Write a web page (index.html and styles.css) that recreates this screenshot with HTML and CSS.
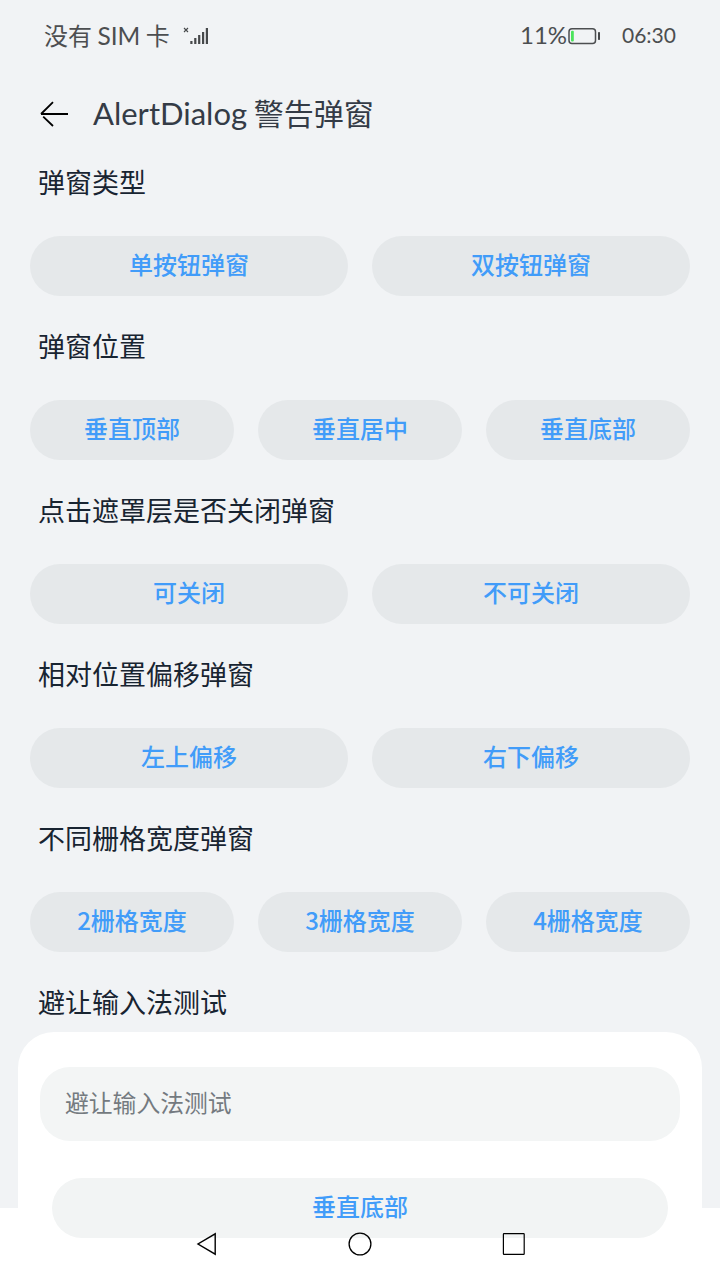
FILE: index.html
```html
<!DOCTYPE html>
<html lang="zh-CN">
<head>
<meta charset="utf-8">
<title>AlertDialog 警告弹窗</title>
<link rel="stylesheet" href="styles.css">
</head>
<body>
<div class="screen">
  <main class="page">
    <div class="status">
      <span class="carrier">没有 <span class="sim">SIM</span> 卡</span>
      <svg class="signal" width="26" height="18" viewBox="0 0 26 18" fill="none" stroke="#46484a">
        <path d="M1 1l4 4M5 1l-4 4" stroke-width="1.1"/>
        <path d="M8.4 14v3M12.3 11v6M16.2 8v9M20.1 5v12M23.9 1v16" stroke-width="2.2"/>
      </svg>
      <span class="percent">11%</span>
      <svg class="battery" width="33" height="18" viewBox="0 0 33 18">
        <rect x="1" y="1.7" width="26.5" height="14.8" rx="3" fill="none" stroke="#4c4e50" stroke-width="1.5"/>
        <rect x="3" y="3.8" width="2.8" height="10.6" rx="1" fill="#4be35b"/>
        <rect x="30" y="5" width="2" height="8" rx=".7" fill="#46484a"/>
      </svg>
      <time class="clock">06:30</time>
    </div>
    <header class="header">
      <svg class="back" width="30" height="28" viewBox="0 0 30 28" fill="none" stroke="#000" stroke-width="1.8">
        <path d="M2 14h27M14 2.2L2 14M4.2 16.6l9.8 9.4"/>
      </svg>
      <h1 class="title"><span class="title-latin">AlertDialog</span> 警告弹窗</h1>
    </header>
    <section class="group">
      <h2 class="label">弹窗类型</h2>
      <div class="row"><button class="btn">单按钮弹窗</button><button class="btn">双按钮弹窗</button></div>
    </section>
    <section class="group">
      <h2 class="label">弹窗位置</h2>
      <div class="row"><button class="btn">垂直顶部</button><button class="btn">垂直居中</button><button class="btn">垂直底部</button></div>
    </section>
    <section class="group">
      <h2 class="label">点击遮罩层是否关闭弹窗</h2>
      <div class="row"><button class="btn">可关闭</button><button class="btn">不可关闭</button></div>
    </section>
    <section class="group">
      <h2 class="label">相对位置偏移弹窗</h2>
      <div class="row"><button class="btn">左上偏移</button><button class="btn">右下偏移</button></div>
    </section>
    <section class="group">
      <h2 class="label">不同栅格宽度弹窗</h2>
      <div class="row"><button class="btn">2栅格宽度</button><button class="btn">3栅格宽度</button><button class="btn">4栅格宽度</button></div>
    </section>
    <section class="group">
      <h2 class="label">避让输入法测试</h2>
    </section>
  </main>
  <div class="sheet">
    <input class="field" type="text" placeholder="避让输入法测试">
    <button class="btn sheet-btn">垂直底部</button>
  </div>
  <nav class="nav">
    <svg width="24" height="24" viewBox="0 0 24 24" fill="none" stroke="#000" stroke-width="1.4"><path d="M21.2 1.8v20.4L4 12z"/></svg>
    <svg width="24" height="24" viewBox="0 0 24 24" fill="none" stroke="#000" stroke-width="1.3"><circle cx="12" cy="12" r="10.9"/></svg>
    <svg width="24" height="24" viewBox="0 0 24 24" fill="none" stroke="#000" stroke-width="1.2"><rect x="1.4" y="1.6" width="20.8" height="20.8" rx=".6"/></svg>
  </nav>
</div>
</body>
</html>
```
FILE: styles.css
```css
* { box-sizing: border-box; }
body { margin: 0; background: #fff; }
.screen {
  position: relative;
  width: 720px;
  height: 1280px;
  overflow: hidden;
  font-family: "Noto Sans CJK SC", sans-serif;
}
.page { height: 1208px; background: #f1f3f5; overflow: hidden; }
.status {
  display: flex;
  align-items: center;
  height: 72px;
  padding: 0 45px 0 44px;
  color: #4c4e50;
  font-size: 24px;
}
.carrier { width: 126px; padding-bottom: 4px; white-space: nowrap; }
.sim { font-family: Lato, sans-serif; font-size: 24.5px; }
.signal { margin-left: 13px; }
.percent {
  width: 46px;
  margin-left: auto;
  padding-bottom: 3px;
  font-family: Lato, sans-serif;
  font-size: 24px;
  white-space: nowrap;
}
.battery { margin-left: 2px; }
.clock {
  width: 53px;
  margin-left: 21px;
  padding-bottom: 3px;
  font-family: Lato, sans-serif;
  font-size: 21px;
  white-space: nowrap;
}
.header {
  display: flex;
  align-items: center;
  height: 84px;
  padding-left: 39px;
}
.title {
  margin: 0 0 0 24px;
  padding-bottom: 4px;
  color: #343b46;
  font-size: 30px;
  font-weight: 400;
  white-space: nowrap;
}
.title-latin { font-family: Lato, sans-serif; font-size: 31px; }
.group { height: 164px; padding: 0 30px; }
.label {
  margin: 0;
  padding: 6px 8px 0;
  height: 80px;
  color: #182431;
  font-size: 27px;
  font-weight: 400;
  line-height: 40px;
}
.row { display: flex; gap: 24px; }
.btn {
  flex: 1;
  height: 60px;
  padding: 0 0 5px;
  border: 0;
  border-radius: 30px;
  background: #e5e8ea;
  color: #419cf9;
  font: 500 24px "Noto Sans CJK SC", sans-serif;
}
.sheet {
  position: absolute;
  inset: 1032px 18px 0;
  display: flex;
  flex-direction: column;
  padding: 35px 22px 0;
  border-radius: 36px 36px 0 0;
  background: #fff;
}
.field {
  height: 74px;
  padding: 0 25px 5px;
  border: 0;
  border-radius: 30px;
  background: #f3f5f5;
  font: 400 23.8px "Noto Sans CJK SC", sans-serif;
}
.field::placeholder { color: #747a80; opacity: 1; }
.sheet-btn { flex: none; margin: 37px 12px 0; background: #f2f4f4; }
.nav {
  position: absolute;
  inset: 1232px 194px auto;
  display: flex;
  justify-content: space-between;
}
```
